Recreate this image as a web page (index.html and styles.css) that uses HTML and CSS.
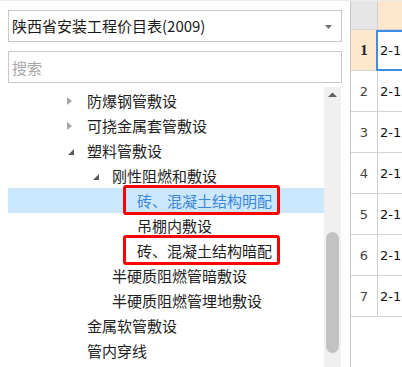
FILE: index.html
```html
<!DOCTYPE html>
<html lang="zh-CN">
<head>
    <meta charset="UTF-8">
    <meta name="viewport" content="width=device-width, initial-scale=1.0">
    <title>价目表</title>
    <link rel="stylesheet" href="styles.css">
</head>
<body>
    <div class="app">
        <div class="side">
            <div class="select">
                陕西省安装工程价目表(2009)
                <svg class="caret" width="7" height="4" viewBox="0 0 7 4"><polygon points="0,0 7,0 3.5,4" fill="#707070"/></svg>
            </div>
            <input type="text" class="search" placeholder="搜索">
            <div class="tree">
                <ul class="nodes">
                    <li class="lv1"><span class="twist"><svg width="5" height="8" viewBox="0 0 5 8"><polygon points="0,0 5,4 0,8" fill="#a6a6a6"/></svg></span>防爆钢管敷设</li>
                    <li class="lv1"><span class="twist"><svg width="5" height="8" viewBox="0 0 5 8"><polygon points="0,0 5,4 0,8" fill="#a6a6a6"/></svg></span>可挠金属套管敷设</li>
                    <li class="lv1"><span class="twist open"><svg width="6" height="6" viewBox="0 0 6 6"><polygon points="6,0 6,6 0,6" fill="#5a5a5a"/></svg></span>塑料管敷设</li>
                    <li class="lv2"><span class="twist open"><svg width="6" height="6" viewBox="0 0 6 6"><polygon points="6,0 6,6 0,6" fill="#5a5a5a"/></svg></span>刚性阻燃和敷设</li>
                    <li class="lv3 selected"><span class="twist"></span><span class="label mark">砖、混凝土结构明配</span></li>
                    <li class="lv3"><span class="twist"></span>吊棚内敷设</li>
                    <li class="lv3"><span class="twist"></span><span class="label mark">砖、混凝土结构暗配</span></li>
                    <li class="lv2"><span class="twist"></span>半硬质阻燃管暗敷设</li>
                    <li class="lv2"><span class="twist"></span>半硬质阻燃管埋地敷设</li>
                    <li class="lv1"><span class="twist"></span>金属软管敷设</li>
                    <li class="lv1"><span class="twist"></span>管内穿线</li>
                </ul>
                <div class="scrollbar">
                    <svg class="arrow-up" width="17" height="17" viewBox="0 0 17 17"><polygon points="4,10 8.5,5.5 13,10" fill="#606060"/></svg>
                    <div class="thumb"></div>
                </div>
            </div>
        </div>

        <div class="sheet">
            <div class="row head">
                <div class="num"></div>
                <div class="cell"></div>
            </div>
            <div class="row current">
                <div class="num">1</div>
                <div class="cell active">2-1</div>
            </div>
            <div class="row"><div class="num">2</div><div class="cell">2-1</div></div>
            <div class="row"><div class="num">3</div><div class="cell">2-1</div></div>
            <div class="row"><div class="num">4</div><div class="cell">2-1</div></div>
            <div class="row"><div class="num">5</div><div class="cell">2-1</div></div>
            <div class="row"><div class="num">6</div><div class="cell">2-1</div></div>
            <div class="row"><div class="num">7</div><div class="cell">2-1</div></div>
        </div>
    </div>
</body>
</html>
```

FILE: styles.css
```css
body {
    margin: 0;
    font-family: "Noto Sans CJK SC", "Noto Sans", sans-serif;
    background-color: #fff;
    color: #1e1e1e;
}

.app {
    display: flex;
    height: 367px;
    overflow: hidden;
    border-top: 1px solid #ececec;
    box-sizing: border-box;
}

.side {
    width: 350px;
    padding: 9px 8px 0;
    box-sizing: border-box;
    display: flex;
    flex-direction: column;
}

.select {
    position: relative;
    height: 32px;
    line-height: 30px;
    border: 1px solid #c9c9c9;
    box-sizing: border-box;
    padding-left: 3px;
    font-size: 15px;
    color: #1a1a1a;
}

.caret {
    position: absolute;
    right: 9px;
    top: 14px;
}

.search {
    margin: 9px 0 0;
    height: 32px;
    border: 1px solid #c9c9c9;
    box-sizing: border-box;
    padding: 0 3px;
    font-family: inherit;
    font-size: 15px;
    outline: none;
}

.search::placeholder {
    color: #a8a8a8;
}

.tree {
    margin-top: 4px;
    flex: 1;
    display: flex;
    overflow: hidden;
}

.nodes {
    list-style: none;
    margin: 0;
    padding: 1px 0 0;
    width: 316px;
}

.nodes li {
    display: flex;
    align-items: center;
    height: 25px;
    line-height: 25px;
    font-size: 15px;
    white-space: nowrap;
}

.lv1 { padding-left: 59px; }
.lv2 { padding-left: 84px; }
.lv3 { padding-left: 109px; }

.twist {
    width: 20px;
    flex: none;
    display: flex;
    align-items: center;
}

.twist svg {
    display: block;
}

.twist.open svg {
    margin-left: 1px;
    margin-top: 2px;
}

.nodes li.selected {
    background-color: #cce8ff;
    color: #3a86d8;
}

.label {
    position: relative;
}

.mark::after {
    content: "";
    position: absolute;
    top: -3px;
    bottom: -2px;
    left: -14px;
    right: -8px;
    border: 3px solid #ff0000;
    border-radius: 3px;
}

.scrollbar {
    width: 17px;
    flex: none;
    background-color: #f0f0f0;
    display: flex;
    flex-direction: column;
}

.arrow-up {
    display: block;
}

.thumb {
    margin: 128px 2px 0;
    height: 121px;
    border-radius: 7px;
    background-color: #c2c2c2;
}

/* grid on the right */
.sheet {
    flex: 1;
    border-left: 1px solid #c8c8c8;
    font-family: "DejaVu Sans", "Liberation Sans", sans-serif;
    font-size: 13px;
}

.row {
    display: flex;
    height: 41px;
    border-bottom: 1px solid #d4d4d4;
    box-sizing: border-box;
}

.row.head {
    height: 29px;
}

.num {
    width: 26px;
    flex: none;
    border-right: 1px solid #d0d0d0;
    display: flex;
    align-items: center;
    justify-content: center;
    color: #444;
}

.cell {
    flex: 1;
    display: flex;
    align-items: center;
    padding-left: 2px;
    color: #111;
    position: relative;
}

.head .num {
    background-color: #e6e6e6;
}

.head .cell {
    background-color: #fde7cd;
}

.current .num {
    background-color: #fde7cd;
    font-family: "Liberation Serif", serif;
    font-weight: bold;
    font-size: 15px;
    color: #222;
}

.cell.active::after {
    content: "";
    position: absolute;
    top: 0;
    bottom: -1px;
    left: -2px;
    right: -4px;
    border: 2px solid #3d8ee8;
}
```
